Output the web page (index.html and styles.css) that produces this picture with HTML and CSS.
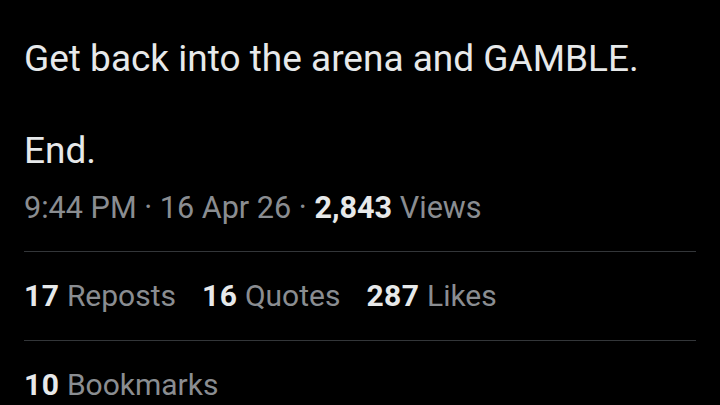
FILE: index.html
```html
<!DOCTYPE html>
<html>
<head>
<meta charset="utf-8">
<link rel="stylesheet" href="styles.css">
</head>
<body>
<div class="tweet">
  <div class="text">
    <p class="line">Get back into the arena and GAMBLE.</p>
    <p class="line blank">&nbsp;</p>
    <p class="line">End.</p>
  </div>
  <div class="meta">9:44 PM · 16 Apr 26 · <b>2,843</b> Views</div>
  <div class="stats">
    <span class="stat"><b>17</b> Reposts</span>
    <span class="stat"><b>16</b> Quotes</span>
    <span class="stat"><b>287</b> Likes</span>
  </div>
  <div class="stats last">
    <span class="stat"><b>10</b> Bookmarks</span>
  </div>
</div>
</body>
</html>
```
FILE: styles.css
```css
html, body {
  margin: 0;
  padding: 0;
  background: #000;
}
body {
  font-family: Roboto, "Noto Sans", sans-serif;
  color: #e7e9ea;
  overflow: hidden;
  height: 405px;
}
.tweet {
  padding: 36px 24px 0 24px;
}
.text .line {
  margin: 0;
  font-size: 37px;
  line-height: 46px;
}
.meta {
  margin-top: 14px;
  font-size: 30.6px;
  line-height: 40px;
  color: #8a8d91;
  padding-bottom: 23px;
  border-bottom: 1px solid #333639;
}
.meta b {
  color: #e7e9ea;
  font-weight: 700;
}
.stats {
  display: flex;
  gap: 26px;
  font-size: 30px;
  line-height: 40px;
  padding: 24px 0;
  border-bottom: 1px solid #333639;
  color: #8a8d91;
}
.stats.last {
  padding-top: 24px;
  padding-bottom: 0;
  border-bottom: none;
}
.stats b {
  color: #e7e9ea;
  font-weight: 700;
  letter-spacing: 0.5px;
}
```
